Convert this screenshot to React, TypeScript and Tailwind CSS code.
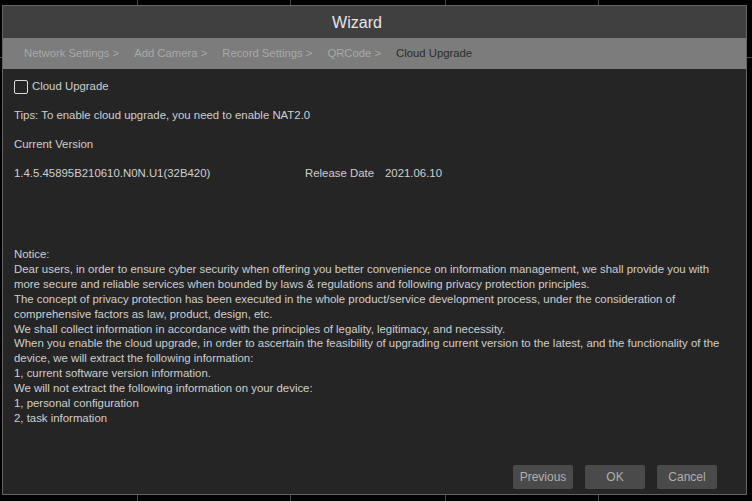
const tabs = ["Network Settings >", "Add Camera >", "Record Settings >", "QRCode >"];

const notice = [
  "Notice:",
  "Dear users, in order to ensure cyber security when offering you better convenience on information management, we shall provide you with",
  "more secure and reliable services when bounded by laws & regulations and following privacy protection principles.",
  "The concept of privacy protection has been executed in the whole product/service development process, under the consideration of",
  "comprehensive factors as law, product, design, etc.",
  "We shall collect information in accordance with the principles of legality, legitimacy, and necessity.",
  "When you enable the cloud upgrade, in order to ascertain the feasibility of upgrading current version to the latest, and the functionality of the",
  "device, we will extract the following information:",
  "1, current software version information.",
  "We will not extract the following information on your device:",
  "1, personal configuration",
  "2, task information",
];

const Button = ({ label }: { label: string }) => (
  <button className="w-[60px] h-[24px] rounded-[2px] bg-[#4a4a4a] text-[12px] text-[#b0b0b0]">{label}</button>
);

export default function App() {
  return (
    <div className="relative w-[752px] h-[501px] overflow-hidden bg-black pt-[5px] pl-[2px] font-['Liberation_Sans',Arial,sans-serif]">
      {/* grid of the live view behind the dialog */}
      <div className="absolute top-0 bottom-0 left-[137px] w-px bg-[#4a4a4a]" />
      <div className="absolute top-0 bottom-0 left-[290px] w-px bg-[#4a4a4a]" />
      <div className="absolute top-0 bottom-0 left-[445px] w-px bg-[#4a4a4a]" />
      <div className="absolute top-0 bottom-0 left-[598px] w-px bg-[#4a4a4a]" />
      <div className="absolute left-0 right-0 top-[57px] h-px bg-[#4a4a4a]" />

      <div className="relative flex flex-col w-[745px] h-[490px] border border-[#646464] bg-[#252525]">
        <div className="h-[32px] flex items-center justify-center pr-[35px] pt-[2px] bg-[#404040] text-[16px] text-[#e6e6e6]">
          Wizard
        </div>
        <div className="h-[31px] flex items-center gap-[15px] pl-[21px] bg-[#7b7c7b] text-[11.3px]">
          {tabs.map((t) => (
            <span key={t} className="text-[#a9aaa9]">{t}</span>
          ))}
          <span className="text-[#2c2c2c]">Cloud Upgrade</span>
        </div>

        <div className="flex-1 flex flex-col pl-[11px] pt-[3px] text-[11.4px] text-[#cfcfcf]">
          <div className="h-[29px] flex items-center">
            <span className="w-[14px] h-[14px] rounded-[2px] border border-[#dcdcdc]" />
            <span className="ml-[4px]">Cloud Upgrade</span>
          </div>
          <div className="h-[29px] flex items-center">Tips: To enable cloud upgrade, you need to enable NAT2.0</div>
          <div className="h-[29px] flex items-center">Current Version</div>
          <div className="h-[29px] flex items-center">
            <span className="w-[291px]">1.4.5.45895B210610.N0N.U1(32B420)</span>
            <span className="w-[80px]">Release Date</span>
            <span>2021.06.10</span>
          </div>

          <div className="mt-[59px] leading-[14.9px]">
            {notice.map((l, i) => (
              <div key={i} className="whitespace-nowrap">{l}</div>
            ))}
          </div>

          <div className="mt-auto mb-[5px] mr-[29px] flex justify-end gap-[12px]">
            <Button label="Previous" />
            <Button label="OK" />
            <Button label="Cancel" />
          </div>
        </div>
      </div>
    </div>
  );
}
